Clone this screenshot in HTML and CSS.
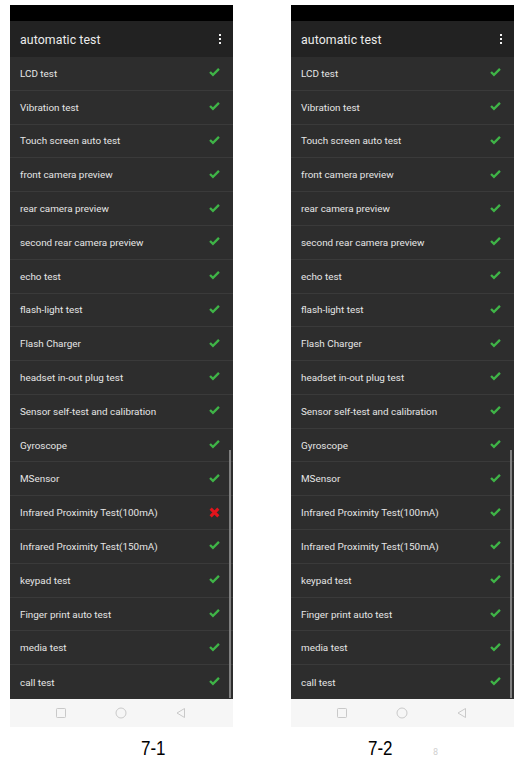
FILE: index.html
```html
<!DOCTYPE html>
<html>
<head>
<meta charset="utf-8">
<link rel="stylesheet" href="styles.css">
</head>
<body>
<div class="page">
  <div class="phones">
    <div class="phone">
      <div class="status"></div>
      <div class="appbar"><span class="title">automatic test</span><span class="menu"><i></i><i></i><i></i></span></div>
      <div class="list">
        <div class="row"><span>LCD test</span><svg class="ok" viewBox="0 0 10 8"><path d="M0.2 4.3 L3.6 7.7 L9.8 1.5 L8.3 0 L3.6 4.7 L1.7 2.8 Z"/></svg></div>
        <div class="row"><span>Vibration test</span><svg class="ok" viewBox="0 0 10 8"><path d="M0.2 4.3 L3.6 7.7 L9.8 1.5 L8.3 0 L3.6 4.7 L1.7 2.8 Z"/></svg></div>
        <div class="row"><span>Touch screen auto test</span><svg class="ok" viewBox="0 0 10 8"><path d="M0.2 4.3 L3.6 7.7 L9.8 1.5 L8.3 0 L3.6 4.7 L1.7 2.8 Z"/></svg></div>
        <div class="row"><span>front camera preview</span><svg class="ok" viewBox="0 0 10 8"><path d="M0.2 4.3 L3.6 7.7 L9.8 1.5 L8.3 0 L3.6 4.7 L1.7 2.8 Z"/></svg></div>
        <div class="row"><span>rear camera preview</span><svg class="ok" viewBox="0 0 10 8"><path d="M0.2 4.3 L3.6 7.7 L9.8 1.5 L8.3 0 L3.6 4.7 L1.7 2.8 Z"/></svg></div>
        <div class="row"><span>second rear camera preview</span><svg class="ok" viewBox="0 0 10 8"><path d="M0.2 4.3 L3.6 7.7 L9.8 1.5 L8.3 0 L3.6 4.7 L1.7 2.8 Z"/></svg></div>
        <div class="row"><span>echo test</span><svg class="ok" viewBox="0 0 10 8"><path d="M0.2 4.3 L3.6 7.7 L9.8 1.5 L8.3 0 L3.6 4.7 L1.7 2.8 Z"/></svg></div>
        <div class="row"><span>flash-light test</span><svg class="ok" viewBox="0 0 10 8"><path d="M0.2 4.3 L3.6 7.7 L9.8 1.5 L8.3 0 L3.6 4.7 L1.7 2.8 Z"/></svg></div>
        <div class="row"><span>Flash Charger</span><svg class="ok" viewBox="0 0 10 8"><path d="M0.2 4.3 L3.6 7.7 L9.8 1.5 L8.3 0 L3.6 4.7 L1.7 2.8 Z"/></svg></div>
        <div class="row"><span>headset in-out plug test</span><svg class="ok" viewBox="0 0 10 8"><path d="M0.2 4.3 L3.6 7.7 L9.8 1.5 L8.3 0 L3.6 4.7 L1.7 2.8 Z"/></svg></div>
        <div class="row"><span>Sensor self-test and calibration</span><svg class="ok" viewBox="0 0 10 8"><path d="M0.2 4.3 L3.6 7.7 L9.8 1.5 L8.3 0 L3.6 4.7 L1.7 2.8 Z"/></svg></div>
        <div class="row"><span>Gyroscope</span><svg class="ok" viewBox="0 0 10 8"><path d="M0.2 4.3 L3.6 7.7 L9.8 1.5 L8.3 0 L3.6 4.7 L1.7 2.8 Z"/></svg></div>
        <div class="row"><span>MSensor</span><svg class="ok" viewBox="0 0 10 8"><path d="M0.2 4.3 L3.6 7.7 L9.8 1.5 L8.3 0 L3.6 4.7 L1.7 2.8 Z"/></svg></div>
        <div class="row"><span>Infrared Proximity Test(100mA)</span><svg class="fail" viewBox="0 0 10 10"><path d="M1.5 1.5 L8.5 8.5 M8.5 1.5 L1.5 8.5"/></svg></div>
        <div class="row"><span>Infrared Proximity Test(150mA)</span><svg class="ok" viewBox="0 0 10 8"><path d="M0.2 4.3 L3.6 7.7 L9.8 1.5 L8.3 0 L3.6 4.7 L1.7 2.8 Z"/></svg></div>
        <div class="row"><span>keypad test</span><svg class="ok" viewBox="0 0 10 8"><path d="M0.2 4.3 L3.6 7.7 L9.8 1.5 L8.3 0 L3.6 4.7 L1.7 2.8 Z"/></svg></div>
        <div class="row"><span>Finger print auto test</span><svg class="ok" viewBox="0 0 10 8"><path d="M0.2 4.3 L3.6 7.7 L9.8 1.5 L8.3 0 L3.6 4.7 L1.7 2.8 Z"/></svg></div>
        <div class="row"><span>media test</span><svg class="ok" viewBox="0 0 10 8"><path d="M0.2 4.3 L3.6 7.7 L9.8 1.5 L8.3 0 L3.6 4.7 L1.7 2.8 Z"/></svg></div>
        <div class="row last"><span>call test</span><svg class="ok" viewBox="0 0 10 8"><path d="M0.2 4.3 L3.6 7.7 L9.8 1.5 L8.3 0 L3.6 4.7 L1.7 2.8 Z"/></svg></div>
        <div class="scrollbar"></div>
      </div>
      <div class="navbar">
        <svg class="nav" viewBox="0 0 12 12"><rect x="1.5" y="1.5" width="9" height="9" rx="0.8"/></svg>
        <svg class="nav" viewBox="0 0 12 12"><circle cx="6" cy="6" r="5"/></svg>
        <svg class="nav" viewBox="0 0 12 12"><path d="M9.5 1.5 L2 6 L9.5 10.5 Z"/></svg>
      </div>
    </div>

    <div class="phone">
      <div class="status"></div>
      <div class="appbar"><span class="title">automatic test</span><span class="menu"><i></i><i></i><i></i></span></div>
      <div class="list">
        <div class="row"><span>LCD test</span><svg class="ok" viewBox="0 0 10 8"><path d="M0.2 4.3 L3.6 7.7 L9.8 1.5 L8.3 0 L3.6 4.7 L1.7 2.8 Z"/></svg></div>
        <div class="row"><span>Vibration test</span><svg class="ok" viewBox="0 0 10 8"><path d="M0.2 4.3 L3.6 7.7 L9.8 1.5 L8.3 0 L3.6 4.7 L1.7 2.8 Z"/></svg></div>
        <div class="row"><span>Touch screen auto test</span><svg class="ok" viewBox="0 0 10 8"><path d="M0.2 4.3 L3.6 7.7 L9.8 1.5 L8.3 0 L3.6 4.7 L1.7 2.8 Z"/></svg></div>
        <div class="row"><span>front camera preview</span><svg class="ok" viewBox="0 0 10 8"><path d="M0.2 4.3 L3.6 7.7 L9.8 1.5 L8.3 0 L3.6 4.7 L1.7 2.8 Z"/></svg></div>
        <div class="row"><span>rear camera preview</span><svg class="ok" viewBox="0 0 10 8"><path d="M0.2 4.3 L3.6 7.7 L9.8 1.5 L8.3 0 L3.6 4.7 L1.7 2.8 Z"/></svg></div>
        <div class="row"><span>second rear camera preview</span><svg class="ok" viewBox="0 0 10 8"><path d="M0.2 4.3 L3.6 7.7 L9.8 1.5 L8.3 0 L3.6 4.7 L1.7 2.8 Z"/></svg></div>
        <div class="row"><span>echo test</span><svg class="ok" viewBox="0 0 10 8"><path d="M0.2 4.3 L3.6 7.7 L9.8 1.5 L8.3 0 L3.6 4.7 L1.7 2.8 Z"/></svg></div>
        <div class="row"><span>flash-light test</span><svg class="ok" viewBox="0 0 10 8"><path d="M0.2 4.3 L3.6 7.7 L9.8 1.5 L8.3 0 L3.6 4.7 L1.7 2.8 Z"/></svg></div>
        <div class="row"><span>Flash Charger</span><svg class="ok" viewBox="0 0 10 8"><path d="M0.2 4.3 L3.6 7.7 L9.8 1.5 L8.3 0 L3.6 4.7 L1.7 2.8 Z"/></svg></div>
        <div class="row"><span>headset in-out plug test</span><svg class="ok" viewBox="0 0 10 8"><path d="M0.2 4.3 L3.6 7.7 L9.8 1.5 L8.3 0 L3.6 4.7 L1.7 2.8 Z"/></svg></div>
        <div class="row"><span>Sensor self-test and calibration</span><svg class="ok" viewBox="0 0 10 8"><path d="M0.2 4.3 L3.6 7.7 L9.8 1.5 L8.3 0 L3.6 4.7 L1.7 2.8 Z"/></svg></div>
        <div class="row"><span>Gyroscope</span><svg class="ok" viewBox="0 0 10 8"><path d="M0.2 4.3 L3.6 7.7 L9.8 1.5 L8.3 0 L3.6 4.7 L1.7 2.8 Z"/></svg></div>
        <div class="row"><span>MSensor</span><svg class="ok" viewBox="0 0 10 8"><path d="M0.2 4.3 L3.6 7.7 L9.8 1.5 L8.3 0 L3.6 4.7 L1.7 2.8 Z"/></svg></div>
        <div class="row"><span>Infrared Proximity Test(100mA)</span><svg class="ok" viewBox="0 0 10 8"><path d="M0.2 4.3 L3.6 7.7 L9.8 1.5 L8.3 0 L3.6 4.7 L1.7 2.8 Z"/></svg></div>
        <div class="row"><span>Infrared Proximity Test(150mA)</span><svg class="ok" viewBox="0 0 10 8"><path d="M0.2 4.3 L3.6 7.7 L9.8 1.5 L8.3 0 L3.6 4.7 L1.7 2.8 Z"/></svg></div>
        <div class="row"><span>keypad test</span><svg class="ok" viewBox="0 0 10 8"><path d="M0.2 4.3 L3.6 7.7 L9.8 1.5 L8.3 0 L3.6 4.7 L1.7 2.8 Z"/></svg></div>
        <div class="row"><span>Finger print auto test</span><svg class="ok" viewBox="0 0 10 8"><path d="M0.2 4.3 L3.6 7.7 L9.8 1.5 L8.3 0 L3.6 4.7 L1.7 2.8 Z"/></svg></div>
        <div class="row"><span>media test</span><svg class="ok" viewBox="0 0 10 8"><path d="M0.2 4.3 L3.6 7.7 L9.8 1.5 L8.3 0 L3.6 4.7 L1.7 2.8 Z"/></svg></div>
        <div class="row last"><span>call test</span><svg class="ok" viewBox="0 0 10 8"><path d="M0.2 4.3 L3.6 7.7 L9.8 1.5 L8.3 0 L3.6 4.7 L1.7 2.8 Z"/></svg></div>
        <div class="scrollbar"></div>
      </div>
      <div class="navbar">
        <svg class="nav" viewBox="0 0 12 12"><rect x="1.5" y="1.5" width="9" height="9" rx="0.8"/></svg>
        <svg class="nav" viewBox="0 0 12 12"><circle cx="6" cy="6" r="5"/></svg>
        <svg class="nav" viewBox="0 0 12 12"><path d="M9.5 1.5 L2 6 L9.5 10.5 Z"/></svg>
      </div>
    </div>
  </div>
  <div class="captions">
    <span class="cap cap1">7-1</span>
    <span class="cap cap2">7-2</span>
    <span class="pageno">8</span>
  </div>
</div>
</body>
</html>
```

FILE: styles.css
```css
* { box-sizing: border-box; }
html, body { margin: 0; padding: 0; background: #fff; }
body { width: 529px; height: 769px; overflow: hidden; font-family: Roboto, "Liberation Sans", sans-serif; }

.page { padding: 5px 0 0 10px; }

.phones { display: flex; gap: 58px; }

.phone { width: 223px; display: flex; flex-direction: column; }

.status { height: 16px; background: #000; }

.appbar {
  height: 36px;
  background: #222222;
  display: flex;
  align-items: center;
  justify-content: space-between;
  padding: 2px 12px 0 10px;
}
.title { color: #ececec; font-size: 12.3px; letter-spacing: 0.1px; }
.menu { display: flex; flex-direction: column; gap: 1.5px; margin-top: -2px; }
.menu i { display: block; width: 2.5px; height: 2.5px; background: #f2f2f2; }

.list {
  position: relative;
  height: 642px;
  display: grid;
  grid-template-rows: repeat(19, 1fr);
  background: #2d2d2d;
}
.row {
  display: flex;
  align-items: center;
  justify-content: space-between;
  padding: 0 14px 0 10px;
  border-bottom: 1px solid #3a3a3a;
  color: #e6e6e6;
  font-size: 9.9px;
}
.row.last { border-bottom: none; }
.ok { width: 11px; height: 9px; fill: #3fb447; margin-top: -1px; margin-right: -0.5px; }
.fail { width: 11px; height: 11px; stroke: #e2141c; stroke-width: 2.8; fill: none; margin-top: -1px; margin-right: -0.5px; }

.scrollbar {
  position: absolute;
  right: 2px;
  top: 393px;
  width: 2px;
  height: 248px;
  background: #808080;
}

.navbar {
  height: 28px;
  background: #f6f6f6;
  display: flex;
  align-items: center;
  justify-content: space-between;
  padding: 0 46px 0 45px;
}
.nav { width: 12px; height: 12px; fill: none; stroke: #c4c4c4; stroke-width: 0.9; }

.captions {
  position: relative;
  height: 40px;
  font-family: "Liberation Sans", sans-serif;
}
.cap { position: absolute; top: 10px; font-size: 20px; color: #000; font-weight: 400; transform: scaleX(0.85); transform-origin: left center; }
.cap1 { left: 131px; }
.cap2 { left: 358px; }
.pageno { position: absolute; left: 423px; top: 21px; font-size: 8px; color: #d0d0d0; font-family: "DejaVu Sans", sans-serif; }
```
